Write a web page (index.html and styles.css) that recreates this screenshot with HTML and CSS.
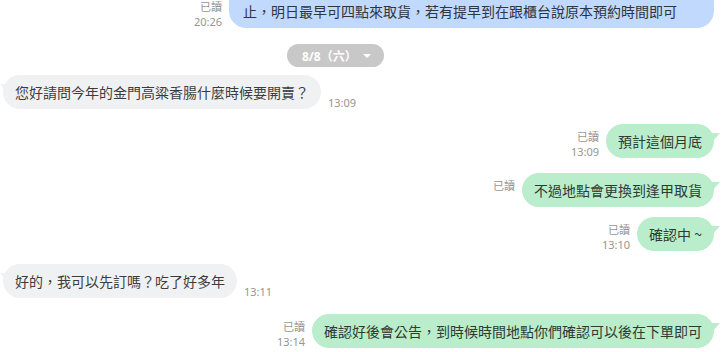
FILE: index.html
```html
<!DOCTYPE html>
<html lang="zh-Hant">
<head>
    <meta charset="UTF-8">
    <meta name="viewport" content="width=device-width, initial-scale=1.0">
    <title>Chat</title>
    <link rel="stylesheet" href="styles.css">
</head>
<body>
    <div class="chat">
        <div class="row out">
            <div class="meta">
                <span>已讀</span>
                <span>20:26</span>
            </div>
            <div class="bubble blue">止，明日最早可四點來取貨，若有提早到在跟櫃台說原本預約時間即可</div>
        </div>

        <div class="date">
            <span class="pill">8/8（六）<i class="caret"></i></span>
        </div>

        <div class="row in first">
            <div class="bubble gray">您好請問今年的金門高粱香腸什麼時候要開賣？</div>
            <div class="meta"><span>13:09</span></div>
        </div>

        <div class="row out">
            <div class="meta">
                <span>已讀</span>
                <span>13:09</span>
            </div>
            <div class="bubble green">預計這個月底</div>
        </div>

        <div class="row out">
            <div class="meta">
                <span>已讀</span>
                <span class="hidden">13:10</span>
            </div>
            <div class="bubble green">不過地點會更換到逢甲取貨</div>
        </div>

        <div class="row out grouped">
            <div class="meta">
                <span>已讀</span>
                <span>13:10</span>
            </div>
            <div class="bubble green">確認中 ~</div>
        </div>

        <div class="row in tight">
            <div class="bubble gray">好的，我可以先訂嗎？吃了好多年</div>
            <div class="meta"><span>13:11</span></div>
        </div>

        <div class="row out loose">
            <div class="meta">
                <span>已讀</span>
                <span>13:14</span>
            </div>
            <div class="bubble green">確認好後會公告，到時候時間地點你們確認可以後在下單即可</div>
        </div>
    </div>
</body>
</html>
```

FILE: styles.css
```css
body {
    margin: 0;
    background: #fff;
    font-family: 'Noto Sans', 'Noto Sans CJK TC', sans-serif;
    color: #333;
    overflow: hidden;
}

.chat {
    display: flex;
    flex-direction: column;
    margin-top: -26px;
}

.row {
    display: flex;
    align-items: flex-end;
    gap: 7px;
    margin-top: 15px;
}

.row.first {
    margin-top: 8px;
}

.row.grouped {
    margin-top: 10px;
}

.row.tight {
    margin-top: 13px;
}

.row.loose {
    margin-top: 16px;
}

.row.out {
    justify-content: flex-end;
    padding-right: 9px;
}

.row.in {
    padding-left: 3px;
}

.row:first-child {
    margin-top: 0;
}

.bubble {
    position: relative;
    font-family: 'Noto Sans CJK TC', sans-serif;
    font-size: 14px;
    line-height: 20px;
    padding: 7px 12px;
    border-radius: 17px;
    white-space: nowrap;
}

.bubble.green {
    background: #b9edcb;
    color: #2f3a33;
}

.bubble.blue {
    background: #c0d9fc;
    color: #2e3440;
    padding-top: 27px;
    padding-left: 14px;
    padding-right: 37px;
}

.bubble.gray {
    background: #f0f1f3;
    color: #3c3c3c;
}

.bubble.green::after,
.bubble.gray::after {
    content: "";
    position: absolute;
    top: 9px;
    width: 9px;
    height: 10px;
    background: inherit;
}

.bubble.green::after {
    right: -6px;
    clip-path: polygon(0 0, 100% 0, 0 100%);
}

.bubble.gray::after {
    left: -3px;
    clip-path: polygon(0 0, 100% 0, 100% 100%);
}

.meta {
    display: flex;
    flex-direction: column;
    font-size: 11px;
    line-height: 15px;
    color: #959595;
    margin-bottom: -1px;
}

.row.out .meta {
    align-items: flex-end;
}

.hidden {
    visibility: hidden;
}

.date {
    display: flex;
    margin-top: 16px;
    padding-left: 287px;
}

.pill {
    display: flex;
    align-items: center;
    height: 23px;
    padding: 0 13px 0 15px;
    border-radius: 12px;
    background: #c8c8c8;
    color: #fff;
    font-size: 12px;
    font-weight: bold;
    font-family: 'Noto Sans', 'Noto Sans CJK TC', sans-serif;
}

.caret {
    display: inline-block;
    margin-left: 6px;
    border-left: 4px solid transparent;
    border-right: 4px solid transparent;
    border-top: 4px solid #fff;
}
```
